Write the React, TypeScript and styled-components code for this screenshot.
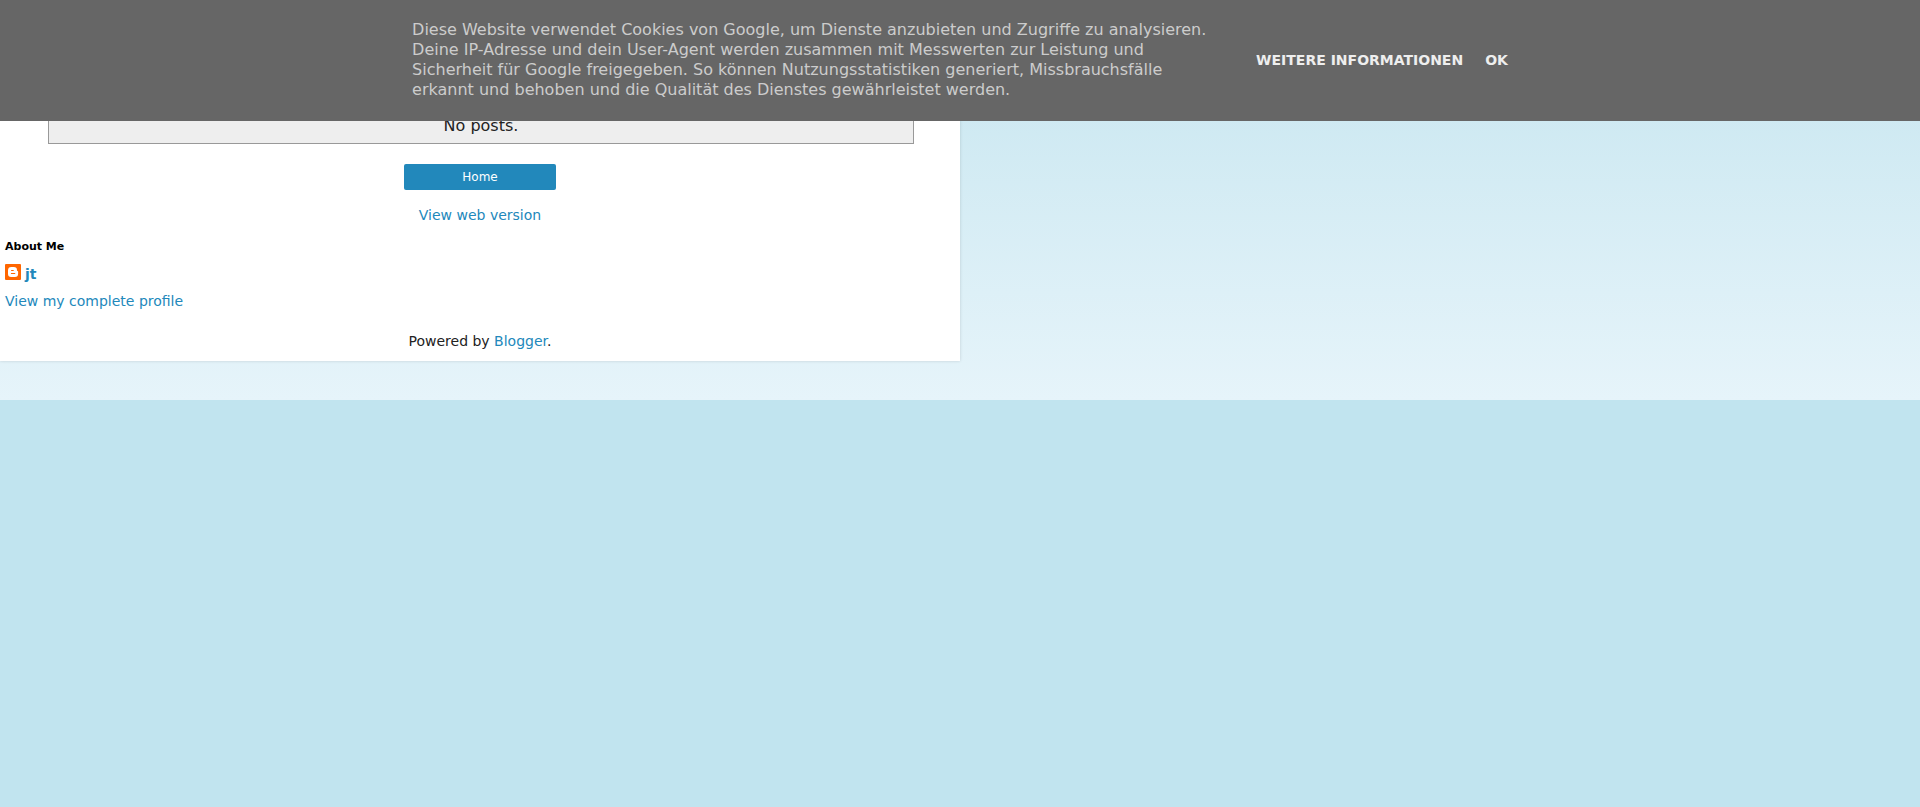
import React from "react";
import styled, { createGlobalStyle } from "styled-components";

const GlobalStyle = createGlobalStyle`
  body {
    margin: 0;
    background: #c1e4ef;
    color: #222222;
    font: 14px/18px "DejaVu Sans", sans-serif;
  }
`;

const CookieBar = styled.div`
  position: fixed;
  inset: 0 0 auto;
  z-index: 10;
  display: flex;
  align-items: center;
  justify-content: center;
  gap: 44px;
  padding: 20px 24px 21px;
  background: #666666;
`;

const CookieText = styled.p`
  max-width: 800px;
  margin: 0;
  color: #cccccc;
  font-size: 16px;
  line-height: 20px;
`;

const CookieActions = styled.div`
  display: flex;
  gap: 22px;
  white-space: nowrap;
`;

const CookieLink = styled.a`
  color: #eeeeee;
  font-weight: bold;
  text-decoration: none;
  text-transform: uppercase;
`;

const Backdrop = styled.div`
  padding: 80px 0 39px;
  background: linear-gradient(#c5e5ef, #e6f4fa);
`;

const Sheet = styled.main`
  width: 50%;
  background: #ffffff;
  box-shadow: 0 0 3px rgba(0, 0, 0, 0.15);
`;

const Posts = styled.section`
  margin: 0 46px 0 48px;
  padding: 35px 5px 7px;
  border: 1px solid #999999;
  background: #eeeeee;
  font-size: 16px;
  line-height: 20px;
  text-align: center;
`;

const Pager = styled.nav`
  display: flex;
  flex-direction: column;
  align-items: center;
  gap: 16px;
  padding-top: 20px;
`;

const TextLink = styled.a`
  color: #2288bb;
  text-decoration: none;
`;

const HomeLink = styled(TextLink)`
  box-sizing: border-box;
  width: 152px;
  padding: 4px 0;
  border-radius: 2px;
  background: #2288bb;
  color: #ffffff;
  font-size: 12px;
  text-align: center;
`;

const About = styled.section`
  display: flex;
  flex-direction: column;
  align-items: flex-start;
  padding: 14px 5px 0;
`;

const AboutTitle = styled.h2`
  margin: 0 0 8px;
  color: #000000;
  font-size: 11px;
  line-height: 18px;
`;

const ProfileLink = styled(TextLink)`
  display: flex;
  gap: 4px;
  margin-bottom: 8px;
  font-weight: bold;
  line-height: 20px;
`;

const Footer = styled.footer`
  padding: 22px 0 11px;
  text-align: center;
`;

const BloggerIcon = () => (
  <svg width="16" height="16" viewBox="0 0 16 16" aria-hidden="true">
    <rect width="16" height="16" rx="1" fill="#ff6600" />
    <path
      fill="#ffffff"
      fillRule="evenodd"
      d="M6.4 3h2.4a3.2 3.2 0 0 1 3.2 3.2c0 .6.1.8.5.8.4 0 .6.2.6.6v2.2A3.2 3.2 0 0 1 9.8 13H6.2A3.2 3.2 0 0 1 3 9.8V6.4A3.4 3.4 0 0 1 6.4 3ZM6.5 6a.5.5 0 0 0 0 1h1.8a.5.5 0 0 0 0-1ZM6.4 9a.5.5 0 0 0 0 1.1h3.4a.5.5 0 0 0 0-1.1Z"
    />
  </svg>
);

export default function App() {
  return (
    <>
      <GlobalStyle />
      <CookieBar>
        <CookieText>
          Diese Website verwendet Cookies von Google, um Dienste anzubieten und
          Zugriffe zu analysieren. Deine IP-Adresse und dein User-Agent werden
          zusammen mit Messwerten zur Leistung und Sicherheit für Google
          freigegeben. So können Nutzungsstatistiken generiert,
          Missbrauchsfälle erkannt und behoben und die Qualität des Dienstes
          gewährleistet werden.
        </CookieText>
        <CookieActions>
          <CookieLink href="#info">Weitere Informationen</CookieLink>
          <CookieLink href="#ok">OK</CookieLink>
        </CookieActions>
      </CookieBar>
      <Backdrop>
        <Sheet>
          <Posts>No posts.</Posts>
          <Pager>
            <HomeLink href="#home">Home</HomeLink>
            <TextLink href="#web">View web version</TextLink>
          </Pager>
          <About>
            <AboutTitle>About Me</AboutTitle>
            <ProfileLink href="#jt">
              <BloggerIcon />
              jt
            </ProfileLink>
            <TextLink href="#profile">View my complete profile</TextLink>
          </About>
          <Footer>
            Powered by <TextLink href="#blogger">Blogger</TextLink>.
          </Footer>
        </Sheet>
      </Backdrop>
    </>
  );
}
